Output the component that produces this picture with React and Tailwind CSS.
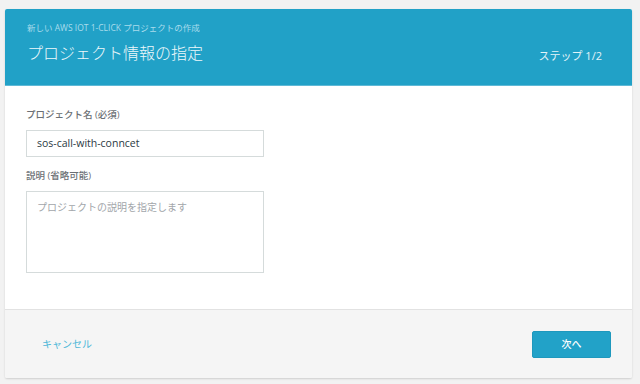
export default function App() {
  const font = { fontFamily: '"Open Sans", "Noto Sans CJK JP", sans-serif' };
  return (
    <div className="w-[640px] h-[384px] bg-[#f2f2f2] pt-[9px] pl-[5px] pr-[8px] overflow-hidden" style={font}>
      <div className="bg-white rounded-[2px] shadow-[0_1px_2px_rgba(0,0,0,0.15)] flex flex-col h-[369px]">
        <div className="bg-[#21a1c7] h-[77px] flex items-end justify-between pl-[22px] pr-[30px] pb-[21px] rounded-t-[2px] border-b border-[#5fb9d6]">
          <div className="flex flex-col">
            <div className="text-[8.5px] leading-[12px] text-[#a9dcec]">新しい AWS IOT 1-CLICK プロジェクトの作成</div>
            <div className="text-[16px] leading-[22px] mt-[8px] font-light text-[#eef8fb]">プロジェクト情報の指定</div>
          </div>
          <div className="text-[11px] leading-[14px] text-[#e3f4f9] mb-[1px]">ステップ 1/2</div>
        </div>
        <div className="flex-1 pl-[21px] pt-[22px]">
          <div className="text-[9.5px] leading-[14px] font-medium text-[#6b6f74]">プロジェクト名 (必須)</div>
          <div className="mt-[8px] w-[238px] h-[27px] border border-[#d5dbdb] flex items-center pl-[10px] text-[10.5px] text-[#2b3a44]">sos-call-with-conncet</div>
          <div className="mt-[12px] text-[9.5px] leading-[14px] font-medium text-[#6b6f74]">説明 (省略可能)</div>
          <div className="mt-[8px] w-[238px] h-[82px] border border-[#d5dbdb] pl-[10px] pt-[8px] text-[10px] leading-[14px] text-[#a2a6aa]">プロジェクトの説明を指定します</div>
        </div>
        <div className="h-[69px] bg-[#f5f5f5] border-t border-[#e2e2e2] flex items-center justify-between pl-[37px] pr-[21px] rounded-b-[2px]">
          <div className="text-[10px] text-[#4cb7d8]">キャンセル</div>
          <div className="w-[79px] h-[27px] bg-[#22a2c8] rounded-[2px] border border-[#1e98bd] flex items-center justify-center text-[10px] font-medium text-white">次へ</div>
        </div>
      </div>
    </div>
  );
}
